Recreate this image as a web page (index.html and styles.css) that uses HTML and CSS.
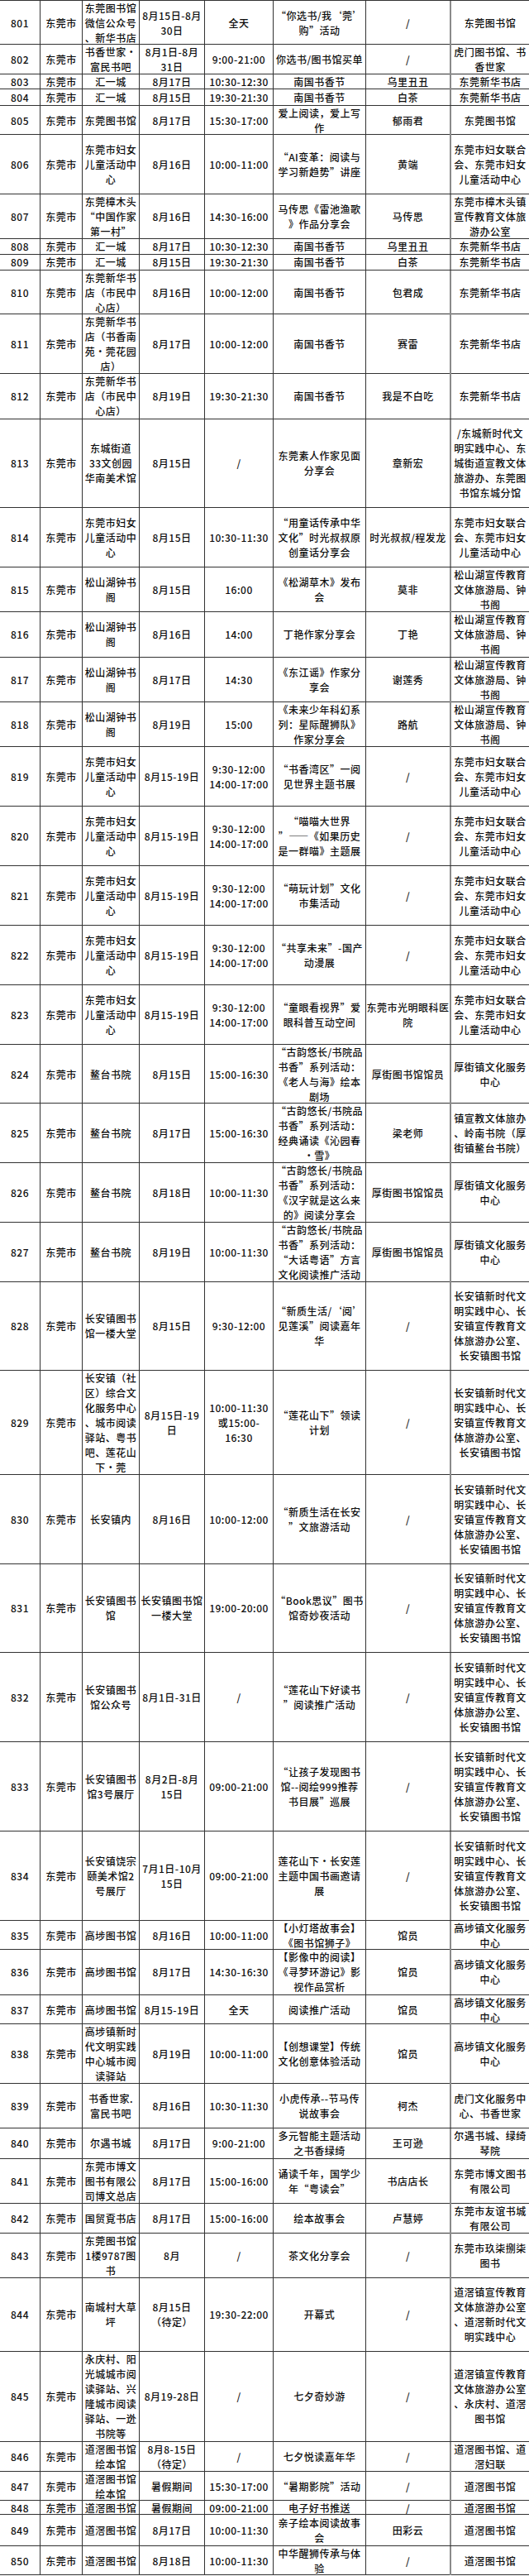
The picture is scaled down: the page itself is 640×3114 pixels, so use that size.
FILE: index.html
```html
<!DOCTYPE html>
<html lang="zh-CN">
<head>
<meta charset="utf-8">
<title>活动表</title>
<link rel="stylesheet" href="styles.css">
</head>
<body>
<div class="tbl">
<div class="row h53"><div>801</div><div>东莞市</div><div>东莞图书馆<br>微信公众号<br>、新华书店</div><div>8月15日-8月<br>30日</div><div>全天</div><div>“你选书/我‘莞’<br>购”活动</div><div>/</div><div>东莞图书馆</div></div>
<div class="row h36"><div>802</div><div>东莞市</div><div>书香世家·<br>富民书吧</div><div>8月1日-8月<br>31日</div><div>9:00-21:00</div><div>你选书/图书馆买单</div><div>/</div><div>虎门图书馆、书<br>香世家</div></div>
<div class="row h18"><div>803</div><div>东莞市</div><div>汇一城</div><div>8月17日</div><div>10:30-12:30</div><div>南国书香节</div><div>乌里丑丑</div><div>东莞新华书店</div></div>
<div class="row h20"><div>804</div><div>东莞市</div><div>汇一城</div><div>8月15日</div><div>19:30-21:30</div><div>南国书香节</div><div>白茶</div><div>东莞新华书店</div></div>
<div class="row h35"><div>805</div><div>东莞市</div><div>东莞图书馆</div><div>8月17日</div><div>15:30-17:00</div><div>爱上阅读，爱上写<br>作</div><div>郁雨君</div><div>东莞图书馆</div></div>
<div class="row h72"><div>806</div><div>东莞市</div><div>东莞市妇女<br>儿童活动中<br>心</div><div>8月16日</div><div>10:00-11:00</div><div>“AI变革：阅读与<br>学习新趋势”讲座</div><div>黄端</div><div>东莞市妇女联合<br>会、东莞市妇女<br>儿童活动中心</div></div>
<div class="row h54"><div>807</div><div>东莞市</div><div>东莞樟木头<br>“中国作家<br>第一村”</div><div>8月16日</div><div>14:30-16:00</div><div>马传思《雷池渔歌<br>》作品分享会</div><div>马传思</div><div>东莞市樟木头镇<br>宣传教育文体旅<br>游办公室</div></div>
<div class="row h19"><div>808</div><div>东莞市</div><div>汇一城</div><div>8月17日</div><div>10:30-12:30</div><div>南国书香节</div><div>乌里丑丑</div><div>东莞新华书店</div></div>
<div class="row h19"><div>809</div><div>东莞市</div><div>汇一城</div><div>8月15日</div><div>19:30-21:30</div><div>南国书香节</div><div>白茶</div><div>东莞新华书店</div></div>
<div class="row h53"><div>810</div><div>东莞市</div><div>东莞新华书<br>店（市民中<br>心店）</div><div>8月16日</div><div>10:00-12:00</div><div>南国书香节</div><div>包君成</div><div>东莞新华书店</div></div>
<div class="row h72"><div>811</div><div>东莞市</div><div>东莞新华书<br>店（书香南<br>苑·莞花园<br>店）</div><div>8月17日</div><div>10:00-12:00</div><div>南国书香节</div><div>赛雷</div><div>东莞新华书店</div></div>
<div class="row h55"><div>812</div><div>东莞市</div><div>东莞新华书<br>店（市民中<br>心店）</div><div>8月19日</div><div>19:30-21:30</div><div>南国书香节</div><div>我是不白吃</div><div>东莞新华书店</div></div>
<div class="row h107"><div>813</div><div>东莞市</div><div>东城街道<br>33文创园<br>华南美术馆</div><div>8月15日</div><div>/</div><div>东莞素人作家见面<br>分享会</div><div>章新宏</div><div>/东城新时代文<br>明实践中心、东<br>城街道宣教文体<br>旅游办、东莞图<br>书馆东城分馆</div></div>
<div class="row h72"><div>814</div><div>东莞市</div><div>东莞市妇女<br>儿童活动中<br>心</div><div>8月15日</div><div>10:30-11:30</div><div>“用童话传承中华<br>文化”时光叔叔原<br>创童话分享会</div><div>时光叔叔/程发龙</div><div>东莞市妇女联合<br>会、东莞市妇女<br>儿童活动中心</div></div>
<div class="row h54"><div>815</div><div>东莞市</div><div>松山湖钟书<br>阁</div><div>8月15日</div><div>16:00</div><div>《松湖草木》发布<br>会</div><div>莫非</div><div>松山湖宣传教育<br>文体旅游局、钟<br>书阁</div></div>
<div class="row h55"><div>816</div><div>东莞市</div><div>松山湖钟书<br>阁</div><div>8月16日</div><div>14:00</div><div>丁艳作家分享会</div><div>丁艳</div><div>松山湖宣传教育<br>文体旅游局、钟<br>书阁</div></div>
<div class="row h54"><div>817</div><div>东莞市</div><div>松山湖钟书<br>阁</div><div>8月17日</div><div>14:30</div><div>《东江谣》作家分<br>享会</div><div>谢莲秀</div><div>松山湖宣传教育<br>文体旅游局、钟<br>书阁</div></div>
<div class="row h54"><div>818</div><div>东莞市</div><div>松山湖钟书<br>阁</div><div>8月19日</div><div>15:00</div><div>《未来少年科幻系<br>列：星际醒狮队》<br>作家分享会</div><div>路航</div><div>松山湖宣传教育<br>文体旅游局、钟<br>书阁</div></div>
<div class="row h72"><div>819</div><div>东莞市</div><div>东莞市妇女<br>儿童活动中<br>心</div><div>8月15-19日</div><div>9:30-12:00<br>14:00-17:00</div><div>“书香湾区”一阅<br>见世界主题书展</div><div>/</div><div>东莞市妇女联合<br>会、东莞市妇女<br>儿童活动中心</div></div>
<div class="row h72"><div>820</div><div>东莞市</div><div>东莞市妇女<br>儿童活动中<br>心</div><div>8月15-19日</div><div>9:30-12:00<br>14:00-17:00</div><div>“喵喵大世界<br>”——《如果历史<br>是一群喵》主题展</div><div>/</div><div>东莞市妇女联合<br>会、东莞市妇女<br>儿童活动中心</div></div>
<div class="row h72"><div>821</div><div>东莞市</div><div>东莞市妇女<br>儿童活动中<br>心</div><div>8月15-19日</div><div>9:30-12:00<br>14:00-17:00</div><div>“萌玩计划”文化<br>市集活动</div><div>/</div><div>东莞市妇女联合<br>会、东莞市妇女<br>儿童活动中心</div></div>
<div class="row h72"><div>822</div><div>东莞市</div><div>东莞市妇女<br>儿童活动中<br>心</div><div>8月15-19日</div><div>9:30-12:00<br>14:00-17:00</div><div>“共享未来”-国产<br>动漫展</div><div>/</div><div>东莞市妇女联合<br>会、东莞市妇女<br>儿童活动中心</div></div>
<div class="row h72"><div>823</div><div>东莞市</div><div>东莞市妇女<br>儿童活动中<br>心</div><div>8月15-19日</div><div>9:30-12:00<br>14:00-17:00</div><div>“童眼看视界”爱<br>眼科普互动空间</div><div>东莞市光明眼科医<br>院</div><div>东莞市妇女联合<br>会、东莞市妇女<br>儿童活动中心</div></div>
<div class="row h71"><div>824</div><div>东莞市</div><div>鳌台书院</div><div>8月15日</div><div>15:00-16:30</div><div>“古韵悠长/书院品<br>书香”系列活动：<br>《老人与海》绘本<br>剧场</div><div>厚街图书馆馆员</div><div>厚街镇文化服务<br>中心</div></div>
<div class="row h72"><div>825</div><div>东莞市</div><div>鳌台书院</div><div>8月17日</div><div>15:00-16:30</div><div>“古韵悠长/书院品<br>书香”系列活动：<br>经典诵读《沁园春<br>•雪》</div><div>梁老师</div><div>镇宣教文体旅办<br>、岭南书院（厚<br>街镇鳌台书院）</div></div>
<div class="row h72"><div>826</div><div>东莞市</div><div>鳌台书院</div><div>8月18日</div><div>10:00-11:30</div><div>“古韵悠长/书院品<br>书香”系列活动：<br>《汉字就是这么来<br>的》阅读分享会</div><div>厚街图书馆馆员</div><div>厚街镇文化服务<br>中心</div></div>
<div class="row h72"><div>827</div><div>东莞市</div><div>鳌台书院</div><div>8月19日</div><div>10:00-11:30</div><div>“古韵悠长/书院品<br>书香”系列活动：<br>“大话粤语”方言<br>文化阅读推广活动</div><div>厚街图书馆馆员</div><div>厚街镇文化服务<br>中心</div></div>
<div class="row h107"><div>828</div><div>东莞市</div><div>长安镇图书<br>馆一楼大堂</div><div>8月15日</div><div>9:30-12:00</div><div>“新质生活/‘阅’<br>见莲溪”阅读嘉年<br>华</div><div>/</div><div>长安镇新时代文<br>明实践中心、长<br>安镇宣传教育文<br>体旅游办公室、<br>长安镇图书馆</div></div>
<div class="row h126"><div>829</div><div>东莞市</div><div>长安镇（社<br>区）综合文<br>化服务中心<br>、城市阅读<br>驿站、粤书<br>吧、莲花山<br>下·莞</div><div>8月15日-19<br>日</div><div>10:00-11:30<br>或15:00-<br>16:30</div><div>“莲花山下”领读<br>计划</div><div>/</div><div>长安镇新时代文<br>明实践中心、长<br>安镇宣传教育文<br>体旅游办公室、<br>长安镇图书馆</div></div>
<div class="row h108"><div>830</div><div>东莞市</div><div>长安镇内</div><div>8月16日</div><div>10:00-12:00</div><div>“新质生活在长安<br>”文旅游活动</div><div>/</div><div>长安镇新时代文<br>明实践中心、长<br>安镇宣传教育文<br>体旅游办公室、<br>长安镇图书馆</div></div>
<div class="row h107"><div>831</div><div>东莞市</div><div>长安镇图书<br>馆</div><div>长安镇图书馆<br>一楼大堂</div><div>19:00-20:00</div><div>“Book思议”图书<br>馆奇妙夜活动</div><div>/</div><div>长安镇新时代文<br>明实践中心、长<br>安镇宣传教育文<br>体旅游办公室、<br>长安镇图书馆</div></div>
<div class="row h108"><div>832</div><div>东莞市</div><div>长安镇图书<br>馆公众号</div><div>8月1日-31日</div><div>/</div><div>“莲花山下好读书<br>”阅读推广活动</div><div>/</div><div>长安镇新时代文<br>明实践中心、长<br>安镇宣传教育文<br>体旅游办公室、<br>长安镇图书馆</div></div>
<div class="row h108"><div>833</div><div>东莞市</div><div>长安镇图书<br>馆3号展厅</div><div>8月2日-8月<br>15日</div><div>09:00-21:00</div><div>“让孩子发现图书<br>馆--阅绘999推荐<br>书目展”巡展</div><div>/</div><div>长安镇新时代文<br>明实践中心、长<br>安镇宣传教育文<br>体旅游办公室、<br>长安镇图书馆</div></div>
<div class="row h108"><div>834</div><div>东莞市</div><div>长安镇饶宗<br>颐美术馆2<br>号展厅</div><div>7月1日-10月<br>15日</div><div>09:00-21:00</div><div>莲花山下·长安莲<br>主题中国书画邀请<br>展</div><div>/</div><div>长安镇新时代文<br>明实践中心、长<br>安镇宣传教育文<br>体旅游办公室、<br>长安镇图书馆</div></div>
<div class="row h35"><div>835</div><div>东莞市</div><div>高埗图书馆</div><div>8月16日</div><div>10:00-11:00</div><div>【小灯塔故事会】<br>《图书馆狮子》</div><div>馆员</div><div>高埗镇文化服务<br>中心</div></div>
<div class="row h55"><div>836</div><div>东莞市</div><div>高埗图书馆</div><div>8月17日</div><div>14:30-16:30</div><div>【影像中的阅读】<br>《寻梦环游记》影<br>视作品赏析</div><div>馆员</div><div>高埗镇文化服务<br>中心</div></div>
<div class="row h35"><div>837</div><div>东莞市</div><div>高埗图书馆</div><div>8月15-19日</div><div>全天</div><div>阅读推广活动</div><div>馆员</div><div>高埗镇文化服务<br>中心</div></div>
<div class="row h72"><div>838</div><div>东莞市</div><div>高埗镇新时<br>代文明实践<br>中心城市阅<br>读驿站</div><div>8月19日</div><div>10:00-11:00</div><div>【创想课堂】传统<br>文化创意体验活动</div><div>馆员</div><div>高埗镇文化服务<br>中心</div></div>
<div class="row h54"><div>839</div><div>东莞市</div><div>书香世家.<br>富民书吧</div><div>8月16日</div><div>10:30-11:30</div><div>小虎传承--节马传<br>说故事会</div><div>柯杰</div><div>虎门文化服务中<br>心、书香世家</div></div>
<div class="row h37"><div>840</div><div>东莞市</div><div>尔遇书城</div><div>8月17日</div><div>9:00-21:00</div><div>多元智能主题活动<br>之书香绿绮</div><div>王可逊</div><div>尔遇书城、绿绮<br>琴院</div></div>
<div class="row h54"><div>841</div><div>东莞市</div><div>东莞市博文<br>图书有限公<br>司博文总店</div><div>8月17日</div><div>15:00-16:00</div><div>诵读千年，国学少<br>年“粤读会”</div><div>书店店长</div><div>东莞市博文图书<br>有限公司</div></div>
<div class="row h36"><div>842</div><div>东莞市</div><div>国贸覔书店</div><div>8月17日</div><div>15:00-16:00</div><div>绘本故事会</div><div>卢慧婷</div><div>东莞市友谊书城<br>有限公司</div></div>
<div class="row h54"><div>843</div><div>东莞市</div><div>东莞图书馆<br>1楼9787图<br>书</div><div>8月</div><div>/</div><div>茶文化分享会</div><div>/</div><div>东莞市玖柒捌柒<br>图书</div></div>
<div class="row h89"><div>844</div><div>东莞市</div><div>南城村大草<br>坪</div><div>8月15日<br>（待定）</div><div>19:30-22:00</div><div>开幕式</div><div>/</div><div>道滘镇宣传教育<br>文体旅游办公室<br>、道滘新时代文<br>明实践中心</div></div>
<div class="row h109"><div>845</div><div>东莞市</div><div>永庆村、阳<br>光城城市阅<br>读驿站、兴<br>隆城市阅读<br>驿站、一迯<br>书院等</div><div>8月19-28日</div><div>/</div><div>七夕奇妙游</div><div>/</div><div>道滘镇宣传教育<br>文体旅游办公室<br>、永庆村、道滘<br>图书馆</div></div>
<div class="row h36"><div>846</div><div>东莞市</div><div>道滘图书馆<br>绘本馆</div><div>8月8-15日<br>（待定）</div><div>/</div><div>七夕悦读嘉年华</div><div>/</div><div>道滘图书馆、道<br>滘妇联</div></div>
<div class="row h35"><div>847</div><div>东莞市</div><div>道滘图书馆<br>绘本馆</div><div>暑假期间</div><div>15:30-17:00</div><div>“暑期影院”活动</div><div>/</div><div>道滘图书馆</div></div>
<div class="row h17"><div>848</div><div>东莞市</div><div>道滘图书馆</div><div>暑假期间</div><div>09:00-21:00</div><div>电子好书推送</div><div>/</div><div>道滘图书馆</div></div>
<div class="row h38"><div>849</div><div>东莞市</div><div>道滘图书馆</div><div>8月17日</div><div>10:00-11:30</div><div>亲子绘本阅读故事<br>会</div><div>田彩云</div><div>道滘图书馆</div></div>
<div class="row h35"><div>850</div><div>东莞市</div><div>道滘图书馆</div><div>8月18日</div><div>10:00-11:30</div><div>中华醒狮传承与体<br>验</div><div>/</div><div>道滘图书馆</div></div>
</div>
</body>
</html>
```

FILE: styles.css
```css
html, body {
  margin: 0;
  padding: 0;
  background: #ffffff;
}

.tbl {
  width: 640px;
  font-family: "Noto Sans CJK SC", "Noto Sans", sans-serif;
  font-size: 12px;
  font-weight: 500;
  letter-spacing: 0.5px;
  line-height: 18px;
  color: #0d0d0d;
  border-top: 1px solid #333333;
}

.row {
  display: grid;
  grid-template-columns: 49px 51px 69px 79px 83px 112px 103px 94px;
  box-sizing: border-box;
  border-bottom: 1px solid #333333;
}

.row > div {
  display: flex;
  flex-direction: column;
  justify-content: center;
  text-align: center;
  white-space: nowrap;
  border-right: 1px solid #333333;
  min-width: 0;
}

.row > div:nth-child(7) {
  border-right: 2px solid #8a8a8a;
}

.row > div:last-child {
  border-right: 0;
}

.h17 { height: 17px; }
.h18 { height: 18px; }
.h19 { height: 19px; }
.h20 { height: 20px; }
.h35 { height: 35px; }
.h36 { height: 36px; }
.h37 { height: 37px; }
.h38 { height: 38px; }
.h53 { height: 53px; }
.h54 { height: 54px; }
.h55 { height: 55px; }
.h71 { height: 71px; }
.h72 { height: 72px; }
.h89 { height: 89px; }
.h107 { height: 107px; }
.h108 { height: 108px; }
.h109 { height: 109px; }
.h126 { height: 126px; }
```
